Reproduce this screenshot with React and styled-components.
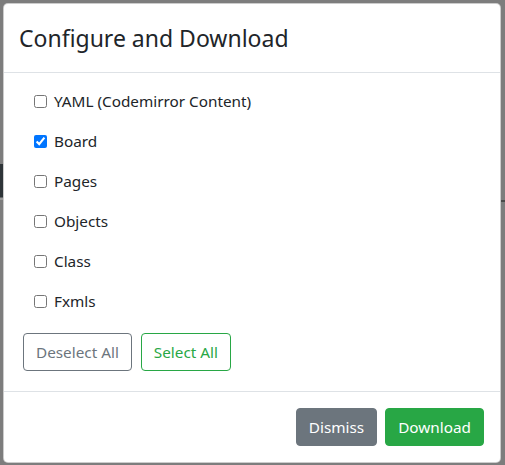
import React, { useState } from 'react';
import styled, { createGlobalStyle } from 'styled-components';

const GlobalStyle = createGlobalStyle`
  html, body {
    margin: 0;
    padding: 0;
    background: #7d7d7d;
  }
  body {
    font-family: "Noto Sans", "Open Sans", Arial, sans-serif;
    color: #212529;
  }
`;

const items = [
  { key: 'yaml', label: 'YAML (Codemirror Content)' },
  { key: 'board', label: 'Board' },
  { key: 'pages', label: 'Pages' },
  { key: 'objects', label: 'Objects' },
  { key: 'class', label: 'Class' },
  { key: 'fxmls', label: 'Fxmls' },
];

const App = () => {
  const [checked, setChecked] = useState({ board: true });

  const toggle = (key) => setChecked((prev) => ({ ...prev, [key]: !prev[key] }));
  const setAll = (value) =>
    setChecked(Object.fromEntries(items.map((i) => [i.key, value])));

  return (
    <>
      <GlobalStyle />
      <Backdrop>
        <Modal>
          <Header>
            <Title>Configure and Download</Title>
          </Header>
          <Body>
            <CheckList>
              {items.map((item) => (
                <CheckRow key={item.key}>
                  <Box
                    type="checkbox"
                    checked={!!checked[item.key]}
                    onChange={() => toggle(item.key)}
                  />
                  {item.label}
                </CheckRow>
              ))}
            </CheckList>
            <ButtonRow>
              <OutlineButton $color="#6c757d" onClick={() => setAll(false)}>
                Deselect All
              </OutlineButton>
              <OutlineButton $color="#28a745" onClick={() => setAll(true)}>
                Select All
              </OutlineButton>
            </ButtonRow>
          </Body>
          <Footer>
            <SolidButton $bg="#6c757d">Dismiss</SolidButton>
            <SolidButton $bg="#28a745">Download</SolidButton>
          </Footer>
        </Modal>
      </Backdrop>
    </>
  );
};

const Backdrop = styled.div`
  min-height: 465px;
  box-sizing: border-box;
  padding: 3px 4px 0 3px;
  background:
    linear-gradient(to bottom, transparent 164px, #2e3438 164px, #2e3438 197px, #9a9a9a 198px, #9a9a9a 200px, transparent 200px) left top / 3px 100% no-repeat,
    linear-gradient(to bottom, transparent 200px, #4a4a4a 200px, #4a4a4a 202px, transparent 202px) right top / 4px 100% no-repeat,
    #7d7d7d;
`;

const Modal = styled.div`
  width: 498px;
  box-sizing: border-box;
  background: #fff;
  border: 1px solid rgba(0, 0, 0, 0.2);
  border-radius: 5px;
  overflow: hidden;
`;

const Header = styled.div`
  padding: 16px 16px 16px 15px;
  border-bottom: 1px solid #dee2e6;
`;

const Title = styled.h4`
  margin: 0;
  font-size: 23px;
  font-weight: 400;
  line-height: 36px;
  color: #212529;
`;

const Body = styled.div`
  padding: 16px 16px 20px 19px;
`;

const CheckList = styled.div`
  display: flex;
  flex-direction: column;
  gap: 16px;
  padding-left: 11px;
  margin-bottom: 20px;
`;

const CheckRow = styled.label`
  display: flex;
  align-items: center;
  gap: 7px;
  font-size: 15.3px;
  line-height: 24px;
  color: #212529;
  cursor: pointer;
`;

const Box = styled.input`
  width: 13px;
  height: 13px;
  margin: 0;
  accent-color: #0075ff;
`;

const ButtonRow = styled.div`
  display: flex;
  gap: 9px;
`;

const BaseButton = styled.button`
  font-family: inherit;
  font-size: 15.3px;
  line-height: 24px;
  padding: 6px 12px;
  border-radius: 4px;
  cursor: pointer;
  white-space: nowrap;
`;

const OutlineButton = styled(BaseButton)`
  background: #fff;
  color: ${(p) => p.$color};
  border: 1px solid ${(p) => p.$color};
`;

const SolidButton = styled(BaseButton)`
  background: ${(p) => p.$bg};
  color: #fff;
  border: 1px solid ${(p) => p.$bg};
`;

const Footer = styled.div`
  display: flex;
  justify-content: flex-end;
  gap: 8px;
  padding: 16px;
  border-top: 1px solid #dee2e6;
`;

export default App;
